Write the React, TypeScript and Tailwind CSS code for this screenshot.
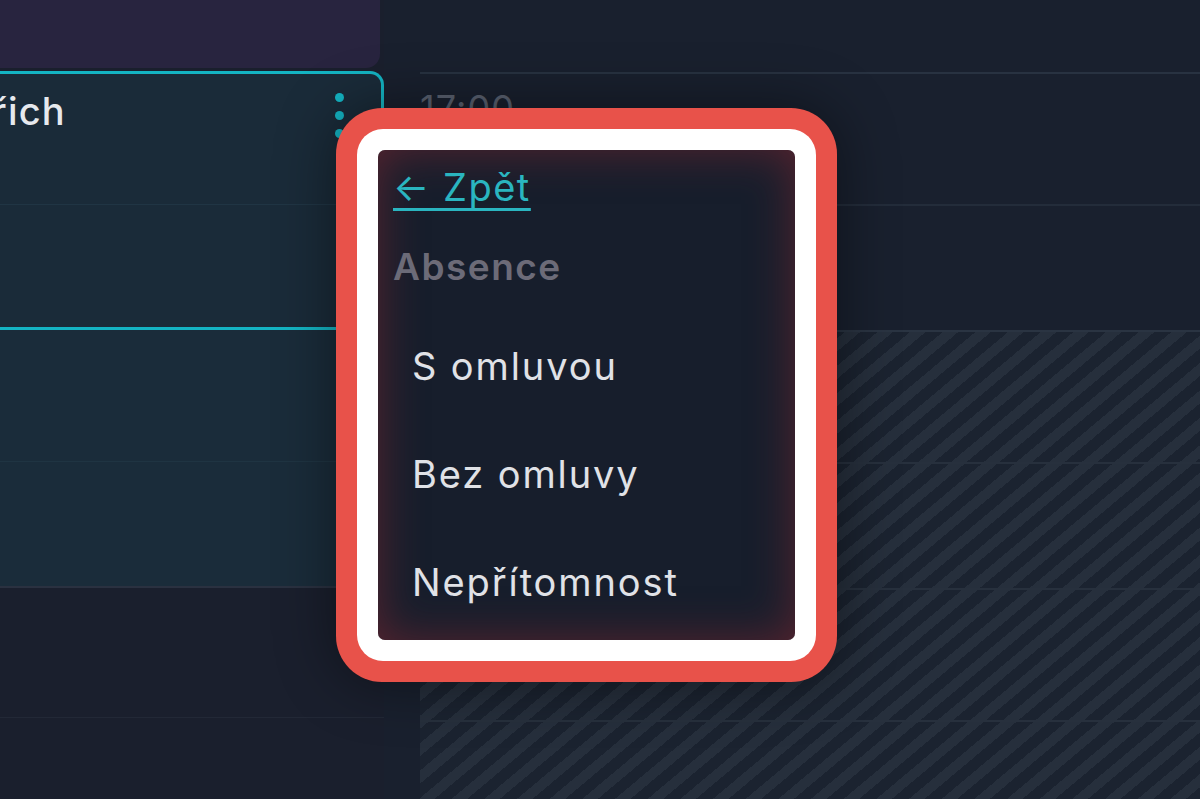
import React from "react";

const font = { fontFamily: "Inter, 'Noto Sans', sans-serif" };

// kebab menu of the selected event
const Kebab = () => (
  <div className="flex flex-col gap-[9px] pt-[1px]">
    <span className="block w-[9px] h-[9px] rounded-full bg-[#14b4c3]" />
    <span className="block w-[9px] h-[9px] rounded-full bg-[#14b4c3]" />
    <span className="block w-[9px] h-[9px] rounded-full bg-[#14b4c3]" />
  </div>
);

const hatch =
  "bg-[repeating-linear-gradient(140deg,#262f3c_0px,#262f3c_10px,#1b2330_10px,#1b2330_21px)]";

const menuItems = ["S omluvou", "Bez omluvy", "Nepřítomnost"];

export default function App() {
  return (
    <div
      className="relative w-[1200px] h-[799px] overflow-hidden bg-[#19202e] flex"
      style={font}
    >
      {/* levý sloupec s událostmi */}
      <div className="w-[384px] shrink-0 flex flex-col bg-[#1a1f2d]">
        <div className="h-[68px] w-[380px] bg-[#28243f] rounded-br-[14px]" />
        <div className="h-[3px]" />

        {/* vybraná událost */}
        <div className="h-[259px] flex flex-col bg-[#1a2b39] border-t-[3px] border-r-[3px] border-b-[3px] border-[#14b4c3] rounded-tr-[14px]">
          <div className="h-[131px] border-b border-[#203544] flex justify-between items-start pt-[18px] pr-[37px]">
            <p className="ml-[-74px] text-[38px] leading-[38px] font-medium tracking-[0.03em] text-[#e6e9ee]">
              Oldřich
            </p>
            <Kebab />
          </div>
        </div>

        {/* další událost */}
        <div className="h-[258px] flex flex-col bg-[#1a2c3a] border-b-2 border-[#2a3140]">
          <div className="h-[132px] border-b border-[#1f3442]" />
        </div>

        <div className="flex-1 flex flex-col">
          <div className="h-[130px] border-b border-[#222836]" />
        </div>
      </div>

      {/* pravá část s časovou osou */}
      <div className="flex-1 flex flex-col pl-[36px]">
        <div className="h-[72px]" />
        <div className="h-[132px] border-t-2 border-[#283241] pt-[16px]">
          <p className="text-[36px] leading-[36px] tracking-[0.03em] text-[#5a6170]">
            17:00
          </p>
        </div>
        <div className="h-[126px] border-t-2 border-[#232c3a]" />
        <div className={`flex-1 flex flex-col border-t-2 border-[#2a3442] ${hatch}`}>
          <div className="h-[132px] border-b-2 border-[#27303d]" />
          <div className="h-[126px] border-b-2 border-[#27303d]" />
          <div className="h-[132px] border-b-2 border-[#27303d]" />
        </div>
      </div>

      {/* zvýrazněná nabídka */}
      <div className="absolute left-[336px] top-[108px] p-[21px] bg-[#e8524a] rounded-[46px] shadow-[0_0_60px_rgba(0,0,0,0.45)]">
        <div className="p-[21px] bg-white rounded-[26px]">
          <div className="w-[417px] h-[490px] rounded-[7px] bg-[#171e2c] shadow-[inset_0_0_45px_rgba(125,38,48,0.65)] flex flex-col px-[15px]">
            <div className="pt-[14px]">
              <a className="text-[38px] leading-[46px] tracking-[0.04em] text-[#2ab5c0] underline underline-offset-[7px] decoration-[3px] [text-decoration-skip-ink:none]">
                ← Zpět
              </a>
            </div>
            <p className="mt-[34px] text-[37px] leading-[46px] font-semibold tracking-[0.04em] text-[#6c6b78]">
              Absence
            </p>
            <div className="mt-[22px] flex flex-col">
              {menuItems.map((item) => (
                <div key={item} className="h-[108px] flex items-center pl-[19px]">
                  <span className="text-[38px] leading-[46px] tracking-[0.05em] text-[#e0e2e7]">
                    {item}
                  </span>
                </div>
              ))}
            </div>
          </div>
        </div>
      </div>
    </div>
  );
}
